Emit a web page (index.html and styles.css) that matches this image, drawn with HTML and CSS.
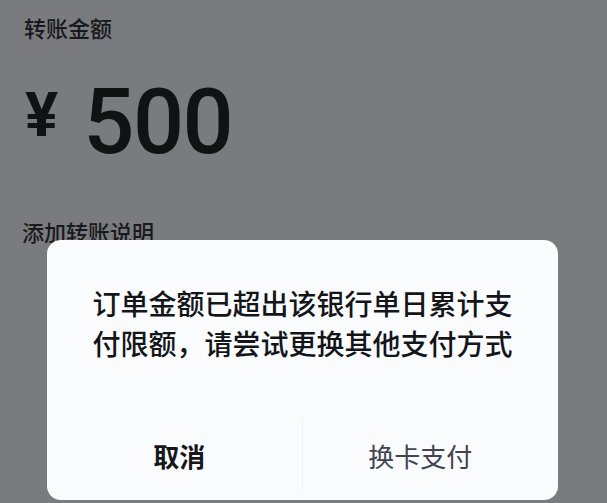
FILE: index.html
```html
<!DOCTYPE html>
<html lang="zh-CN">
<head>
    <meta charset="UTF-8">
    <meta name="viewport" content="width=device-width, initial-scale=1.0">
    <title>转账</title>
    <link rel="stylesheet" href="styles.css">
</head>
<body>
    <div class="page">
        <div class="label">转账金额</div>
        <div class="amount">
            <span class="currency">¥</span>
            <span class="value">500</span>
        </div>
        <div class="label note">添加转账说明</div>
    </div>

    <div class="dialog">
        <div class="message">订单金额已超出该银行单日累计支付限额，请尝试更换其他支付方式</div>
        <div class="actions">
            <button class="btn btn-cancel">取消</button>
            <button class="btn btn-change">换卡支付</button>
        </div>
    </div>
</body>
</html>
```

FILE: styles.css
```css
body {
    margin: 0;
    padding: 0;
    background-color: #7a7b7f;
    font-family: "Noto Sans CJK SC", "Noto Sans", sans-serif;
    height: 503px;
    overflow: hidden;
    position: relative;
}
.page {
    padding: 16px 22px 0 24px;
}
.label {
    font-size: 22px;
    line-height: 22px;
    font-weight: 500;
    color: #18191c;
}
.amount {
    display: flex;
    align-items: flex-start;
    margin-top: 40px;
    font-family: Roboto, "Noto Sans", sans-serif;
    color: #111214;
    line-height: 1;
}
.currency {
    font-size: 62px;
    font-weight: 700;
    margin-top: 6px;
    margin-left: 1px;
}
.value {
    font-size: 90px;
    font-weight: 500;
    letter-spacing: -1.5px;
    margin-left: 25px;
}
.note {
    margin-top: 52px;
    margin-left: -2px;
}
.dialog {
    position: absolute;
    left: 47px;
    top: 240px;
    width: 511px;
    height: 260px;
    background-color: #fafbfd;
    border-radius: 14px;
}
.message {
    padding: 43px 45px 0;
    font-size: 28px;
    line-height: 40px;
    font-weight: 500;
    color: #141518;
    text-align: center;
}
.actions {
    display: grid;
    grid-template-columns: 1fr 1fr;
    margin-top: 57px;
    height: 70px;
}
.btn {
    border: none;
    background: none;
    font-family: "Noto Sans CJK SC", sans-serif;
    font-size: 26px;
    padding: 0;
    cursor: pointer;
}
.btn-cancel {
    font-weight: 700;
    color: #16171a;
    padding-left: 10px;
    border-right: 1px solid #eef0f3;
}
.btn-change {
    font-weight: 400;
    color: #41444f;
    padding-right: 20px;
}
```
